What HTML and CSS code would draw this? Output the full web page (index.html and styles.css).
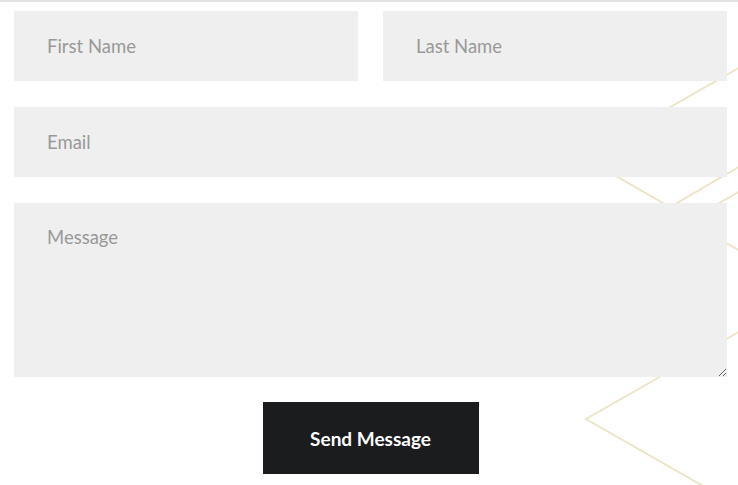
FILE: index.html
```html
<!DOCTYPE html>
<html lang="en">
<head>
  <meta charset="UTF-8" />
  <meta name="viewport" content="width=device-width, initial-scale=1.0" />
  <title>Contact</title>
  <link rel="stylesheet" href="styles.css">
</head>
<body>
  <div class="contact">
    <svg class="pattern" width="738" height="485" viewBox="0 0 738 485">
      <polyline points="742,66 583,157 670,207 742,165" />
      <polyline points="742,190 688,221 742,252" />
      <polyline points="742,330 586,419 710,490" />
    </svg>

    <form class="contact-form">
      <div class="row two">
        <input type="text" placeholder="First Name" />
        <input type="text" placeholder="Last Name" />
      </div>
      <input type="email" placeholder="Email" />
      <textarea placeholder="Message"></textarea>
      <div class="actions">
        <button type="button" class="send-btn">Send Message</button>
      </div>
    </form>
  </div>
</body>
</html>
```

FILE: styles.css
```css
    body {
      margin: 0;
      background: #fff;
      font-family: Lato, "Open Sans", sans-serif;
    }
    .contact {
      position: relative;
      height: 485px;
      border-top: 2px solid #e2e2e2;
      box-sizing: border-box;
      overflow: hidden;
    }
    .pattern {
      position: absolute;
      top: -2px;
      left: 0;
      z-index: 0;
    }
    .pattern polyline {
      fill: none;
      stroke: #ede5c8;
      stroke-width: 2;
    }
    .contact-form {
      position: relative;
      z-index: 1;
      display: flex;
      flex-direction: column;
      gap: 26px;
      padding: 9px 11px 0 14px;
    }
    .row.two {
      display: grid;
      grid-template-columns: 1fr 1fr;
      gap: 25px;
    }
    .contact-form input,
    .contact-form textarea {
      box-sizing: border-box;
      width: 100%;
      height: 70px;
      margin: 0;
      padding: 0 33px;
      border: none;
      background: #efefef;
      font-family: Lato, sans-serif;
      font-size: 18.5px;
      color: #555;
      outline: none;
    }
    .contact-form textarea {
      height: 174px;
      padding: 23px 33px;
      display: block;
    }
    .contact-form ::placeholder {
      color: #999;
      opacity: 1;
    }
    .actions {
      display: flex;
      justify-content: center;
      margin-top: -1px;
    }
    .send-btn {
      width: 216px;
      height: 72px;
      border: none;
      background: #1b1c1e;
      color: #fff;
      font-family: Lato, sans-serif;
      font-weight: 700;
      font-size: 19px;
      padding: 0;
      cursor: pointer;
    }
```
